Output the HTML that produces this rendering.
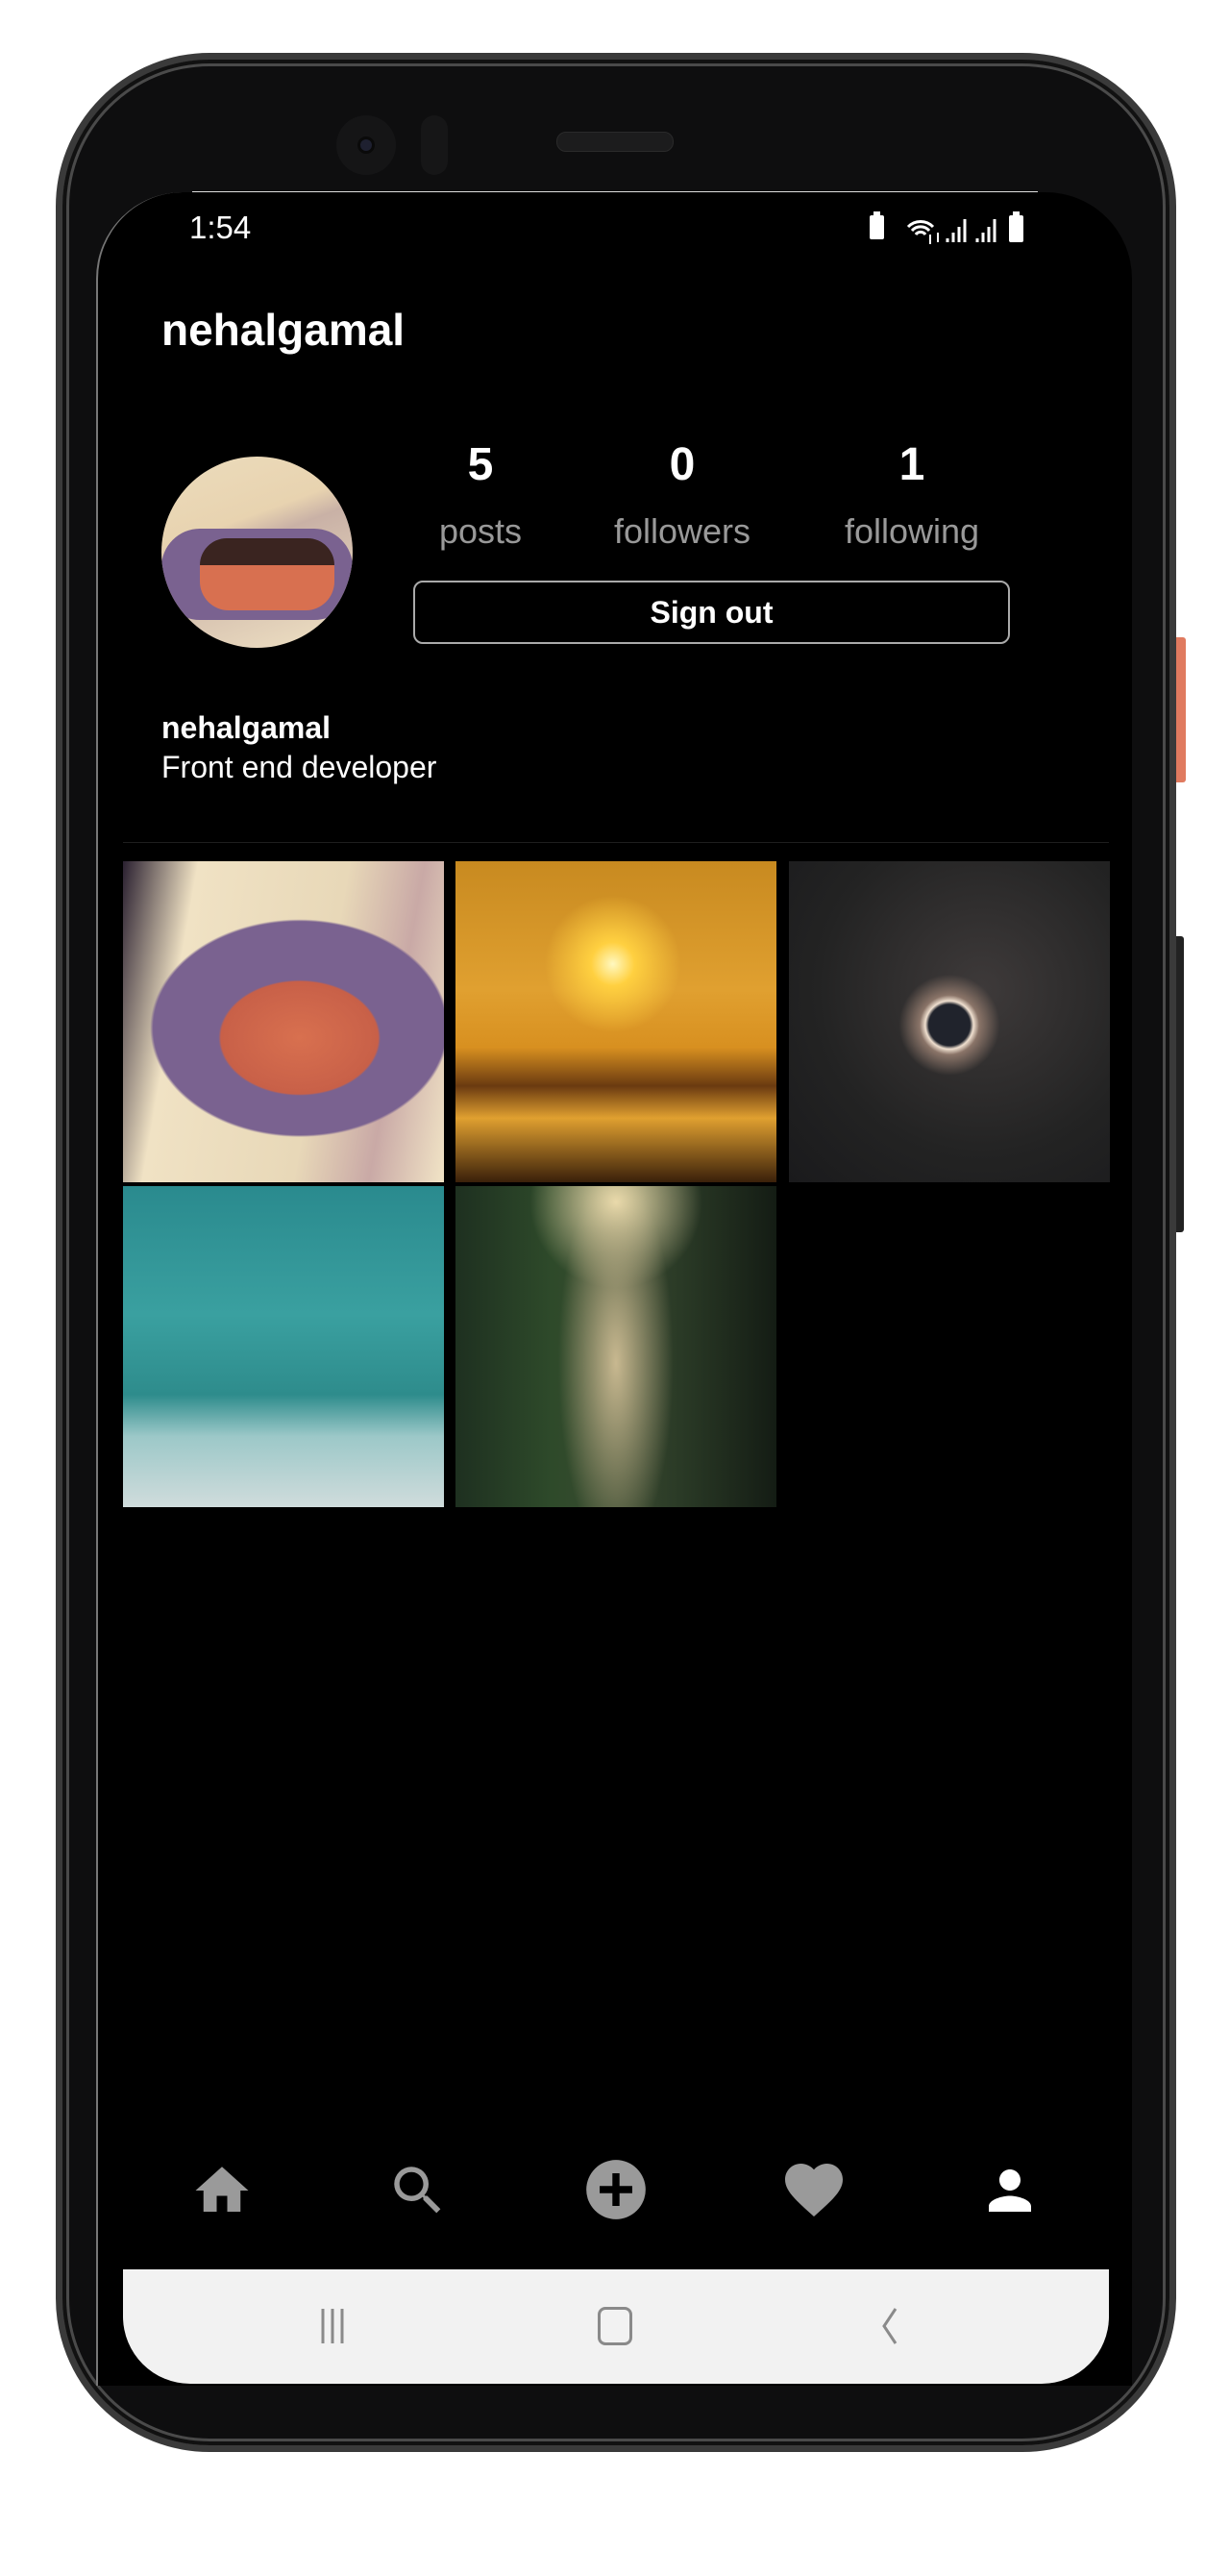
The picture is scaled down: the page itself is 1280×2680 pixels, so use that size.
<!DOCTYPE html>
<html><head><meta charset="utf-8"><style>
*{margin:0;padding:0;box-sizing:border-box}
body{width:1280px;height:2680px;background:#fff;position:relative;overflow:hidden;font-family:"Liberation Sans",sans-serif}
.abs{position:absolute}
.phone{left:58px;top:55px;width:1166px;height:2496px;border-radius:160px;background:#0e0e0f;border:7px solid #3a3a3a;box-shadow:inset 0 0 0 4px #111,inset 0 0 0 7px #4a4a4a}
.screen{left:100px;top:200px;width:1078px;height:2282px;background:#000;border-radius:90px 90px 0 0;overflow:hidden;border-left:2px solid #777}
.t{color:#fff;position:absolute;white-space:nowrap}
.tile{position:absolute;width:334px;height:334px;overflow:hidden}
</style></head><body>
<div class="abs" style="left:1222px;top:663px;width:12px;height:151px;background:#e07a5f;border-radius:0 3px 3px 0"></div>
<div class="abs" style="left:1222px;top:974px;width:10px;height:308px;background:#222;border-radius:0 3px 3px 0"></div>
<div class="abs phone"></div>
<div class="abs" style="left:350px;top:120px;width:62px;height:62px;border-radius:50%;background:#151516"></div>
<div class="abs" style="left:372px;top:142px;width:18px;height:18px;border-radius:50%;background:#1e2030;border:3px solid #0a0a0a"></div>
<div class="abs" style="left:438px;top:120px;width:28px;height:62px;border-radius:14px;background:#161617"></div>
<div class="abs" style="left:579px;top:137px;width:122px;height:21px;border-radius:10px;background:#1c1c1d;border:1px solid #2a2a2a"></div>
<div class="abs" style="left:200px;top:199px;width:880px;height:2px;background:#ddd"></div>
<div class="abs screen"></div>
<div class="t" style="left:197px;top:218px;font-size:33px">1:54</div>
<svg class="abs" style="left:900px;top:218px" width="200" height="40" viewBox="0 0 200 40">
<rect x="5" y="6" width="15" height="25" rx="2" fill="#fff"/><rect x="9" y="2" width="7" height="5" fill="#fff"/>
<path d="M45 18a18 18 0 0 1 26 0M49 22a12 12 0 0 1 18 0M53 26a6 6 0 0 1 10 0" stroke="#fff" stroke-width="3" fill="none"/>
<path d="M68 26v10M76 24v10" stroke="#fff" stroke-width="2"/>
<path d="M86 34v-4M92 34v-10M98 34v-16M104 34v-24" stroke="#fff" stroke-width="3"/>
<path d="M117 34v-4M123 34v-10M129 34v-16M135 34v-24" stroke="#fff" stroke-width="3"/>
<rect x="150" y="6" width="15" height="28" rx="2" fill="#fff"/><rect x="154" y="2" width="7" height="5" fill="#fff"/>
</svg>
<div class="t" style="left:168px;top:316px;font-size:46px;font-weight:bold">nehalgamal</div>
<div class="abs" style="left:168px;top:475px;width:199px;height:199px;border-radius:50%;overflow:hidden;background:linear-gradient(160deg,#ecdcbc 0%,#e8d3b0 35%,#c9b1a6 45%,#f0e2c4 100%)">
<div class="abs" style="left:0;top:75px;width:199px;height:95px;background:#7a6290;border-radius:40px"></div>
<div class="abs" style="left:40px;top:85px;width:140px;height:75px;background:#d87050;border-radius:30px"></div>
<div class="abs" style="left:40px;top:85px;width:140px;height:28px;background:#3a2420;border-radius:30px 30px 0 0"></div>
</div>
<div class="t" style="left:460px;top:456px;width:80px;text-align:center;font-size:48px;font-weight:bold">5</div>
<div class="t" style="left:430px;top:532px;width:140px;text-align:center;font-size:36px;color:#999">posts</div>
<div class="t" style="left:670px;top:456px;width:80px;text-align:center;font-size:48px;font-weight:bold">0</div>
<div class="t" style="left:610px;top:532px;width:200px;text-align:center;font-size:36px;color:#999">followers</div>
<div class="t" style="left:909px;top:456px;width:80px;text-align:center;font-size:48px;font-weight:bold">1</div>
<div class="t" style="left:849px;top:532px;width:200px;text-align:center;font-size:36px;color:#999">following</div>
<div class="abs" style="left:430px;top:604px;width:621px;height:66px;border:2px solid #aaa;border-radius:10px"></div>
<div class="t" style="left:430px;top:619px;width:621px;text-align:center;font-size:32px;font-weight:bold">Sign out</div>
<div class="t" style="left:168px;top:739px;font-size:32px;font-weight:bold">nehalgamal</div>
<div class="t" style="left:168px;top:780px;font-size:32px">Front end developer</div>
<div class="abs" style="left:128px;top:876px;width:1026px;height:1px;background:#1e1e1e"></div>
<div class="tile" style="left:128px;top:896px;background:radial-gradient(ellipse 35% 25% at 55% 55%,#d8704f 0%,#c86048 70%,transparent 72%),radial-gradient(ellipse 48% 35% at 55% 52%,#7a6290 0%,#7a6290 95%,transparent 97%),linear-gradient(100deg,#2a2030 0%,#f0e2c4 20%,#e8d8b8 60%,#c9a9a6 80%,#f1e4c6 100%)"></div>
<div class="tile" style="left:474px;top:896px;background:radial-gradient(circle at 49% 32%,#fff8c0 0%,#ffd040 8%,transparent 25%),linear-gradient(180deg,#c88a20 0%,#e0a030 40%,#d89020 58%,#6a3a10 70%,#e0a030 80%,#3a200a 100%)"></div>
<div class="tile" style="left:821px;top:896px;background:radial-gradient(circle at 50% 51%,#20232c 0%,#20232c 9%,#f0e0d0 10.5%,#8a7468 13%,transparent 22%),radial-gradient(ellipse at 60% 40%,#3e3a3a 0%,#232323 60%,#1a1a1c 100%)"></div>
<div class="tile" style="left:128px;top:1234px;background:linear-gradient(180deg,#2a8a8e 0%,#3aa0a0 40%,#2e8c8c 65%,#9cc8c8 78%,#d0dcdc 100%)"></div>
<div class="tile" style="left:474px;top:1234px;background:radial-gradient(ellipse 18% 60% at 50% 55%,#c8b890 0%,transparent 100%),radial-gradient(circle at 50% 5%,#f0e0b0 0%,transparent 25%),linear-gradient(90deg,#1e3020 0%,#2e4a2a 30%,#3a4a30 50%,#2a3a26 70%,#141c14 100%)"></div>
<svg class="abs" style="left:196px;top:2246px" width="70" height="66" viewBox="0 0 24 24"><path d="M10 20v-6h4v6h5v-8h3L12 3 2 12h3v8z" fill="#9a9a9a"/></svg>
<svg class="abs" style="left:400px;top:2246px" width="70" height="66" viewBox="0 0 24 24"><path d="M15.5 14h-.79l-.28-.27A6.47 6.470 0 0 0 16 9.5 6.5 6.5 0 1 0 9.5 16c1.61 0 3.09-.59 4.23-1.57l.27.28v.79l5 4.990L20.490 19l-4.990-5zm-6 0C7.010 14 5 11.990 5 9.5S7.010 5 9.5 5 14 7.010 14 9.5 11.990 14 9.5 14z" fill="#9a9a9a"/></svg>
<svg class="abs" style="left:604px;top:2240px" width="74" height="76" viewBox="0 0 24 24"><circle cx="12" cy="12" r="10" fill="#9a9a9a"/><path d="M12 6.5v11M6.5 12h11" stroke="#000" stroke-width="2.4"/></svg>
<svg class="abs" style="left:810px;top:2242px" width="74" height="72" viewBox="0 0 24 24"><path d="M12 21.35l-1.45-1.32C5.4 15.36 2 12.28 2 8.5 2 5.42 4.42 3 7.5 3c1.74 0 3.41.81 4.5 2.09C13.09 3.81 14.76 3 16.5 3 19.58 3 22 5.42 22 8.5c0 3.78-3.4 6.86-8.55 11.54L12 21.35z" fill="#9a9a9a"/></svg>
<svg class="abs" style="left:1018px;top:2246px" width="66" height="66" viewBox="0 0 24 24"><path d="M12 12c2.21 0 4-1.79 4-4s-1.79-4-4-4-4 1.79-4 4 1.79 4 4 4zm0 2c-2.67 0-8 1.34-8 4v2h16v-2c0-2.66-5.33-4-8-4z" fill="#fff"/></svg>
<div class="abs" style="left:128px;top:2361px;width:1026px;height:119px;background:#f2f2f2;border-radius:0 0 70px 70px"></div>
<svg class="abs" style="left:330px;top:2400px" width="50" height="40"><path d="M6 2v36M16 2v36M26 2v36" stroke="#8a8a8a" stroke-width="3"/></svg>
<div class="abs" style="left:622px;top:2400px;width:36px;height:40px;border:3px solid #8a8a8a;border-radius:8px"></div>
<svg class="abs" style="left:910px;top:2400px" width="30" height="40"><path d="M22 2L10 20l12 18" stroke="#8a8a8a" stroke-width="3" fill="none"/></svg>
</body></html>
